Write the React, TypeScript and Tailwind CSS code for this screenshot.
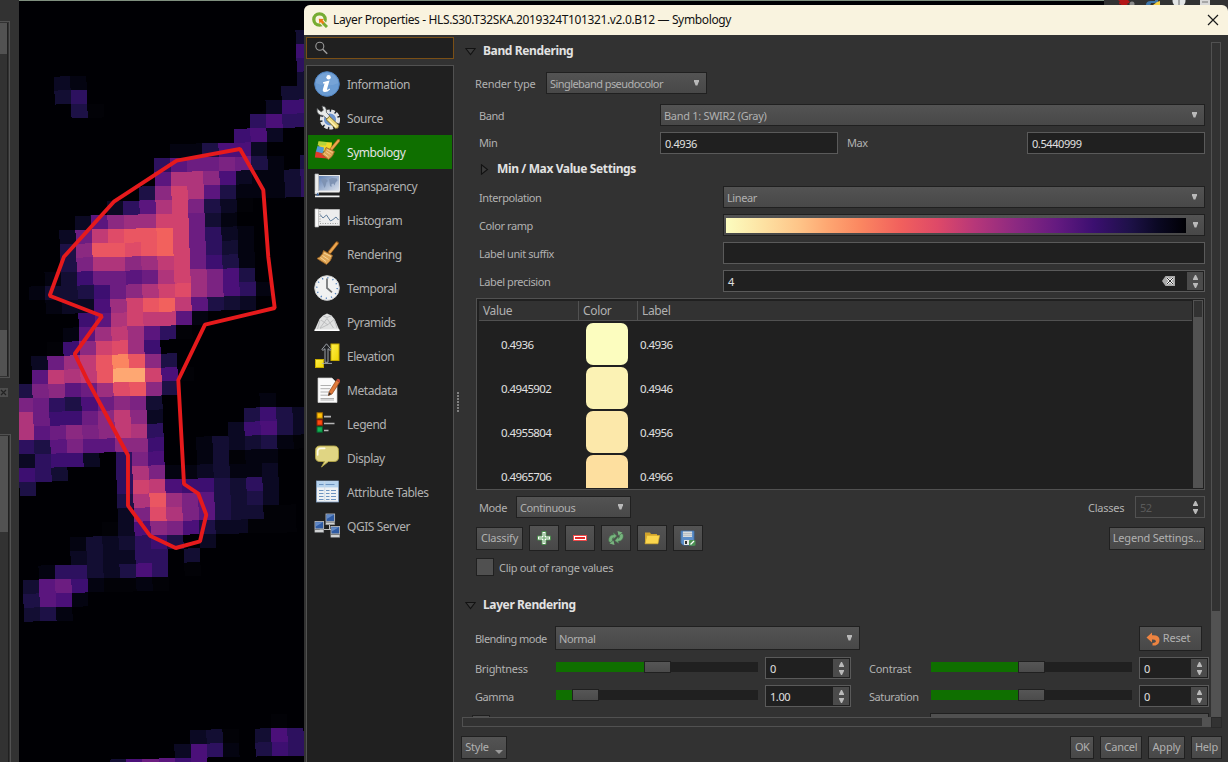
import React from "react";

const PALETTE: Record<string, string> = {
  "0": "#020207", "1": "#040411", "2": "#0b0923", "3": "#130e33", "4": "#1d1146",
  "5": "#2d115f", "6": "#3d0f71", "7": "#4b1079", "8": "#5b167e", "9": "#6c1d81",
  A: "#7b2382", B: "#8b2981", C: "#9d2f7f", D: "#af357b", E: "#c13b75",
  F: "#d0426e", G: "#df4b68", H: "#ea5662", I: "#f2615d", J: "#fb8560", K: "#fea772",
};

const FIRST_ROW = -9;
const FIRST_COL = -9;
const RASTER: string[] = [
  "..................3",
  "..................6",
  "..................5",
  "...21.............3",
  "...35............33",
  "....40..........266",
  "...............5755",
  "..............672..",
  "..........114772...",
  ".........5899A941.4",
  ".........8DDB721135",
  "........4BFD8411135",
  "......258DFA420....",
  "....28BCCFF931.....",
  "...29EGHHIF9521....",
  "...4BHHGHIF9531....",
  "...4ADDBCEF9641....",
  "..1369989DFCA74....",
  ".133469BDFGCA751...",
  "..1227CFHIE8432....",
  "....68DFEE81.......",
  "...18CEC850........",
  "..06BFGC6..........",
  ".29CEHJHB4.........",
  ".8EDEHKKF70........",
  "4AB89CGHB4.........",
  "A95479BA3......1...",
  "D9669BEB2.....46421",
  "D89BABED5....26742.",
  "548A88BB6..1323410.",
  "25662.5A7..13011...",
  "653...5DA1123112...",
  "4.....5FE7664352...",
  "......4DHCA84342...",
  "......2AGDA843300..",
  ".....027BA7422000..",
  "...1323564.2.......",
  "...232255 3........",
  ".15532475 0........",
  "389610010..........",
  "4871...............",
  "341................",
  "...................",
  "...................",
  "...................",
  "...................",
  "...................",
  "...................",
  "...................",
  "...............0...",
  "..........230.375..",
  ".........2751.465..",
  ".....379867........",
];

function corner(c: number, r: number) {
  const x = (462 + 48.6 * c + 1.45 * r) / 3;
  const y = (475 - c + 41.85 * r) / 3;
  return `${x.toFixed(2)},${y.toFixed(2)}`;
}

function MapCanvas() {
  const cells: React.ReactNode[] = [];
  RASTER.forEach((line, ri) => {
    const r = ri + FIRST_ROW;
    for (let i = 0; i < line.length; i++) {
      const fill = PALETTE[line[i]];
      if (!fill) continue;
      const c = i + FIRST_COL;
      cells.push(
        <polygon
          key={`${r}_${c}`}
          points={`${corner(c, r)} ${corner(c + 1, r)} ${corner(c + 1, r + 1)} ${corner(c, r + 1)}`}
          fill={fill}
        />
      );
    }
  });
  return (
    <svg className="block h-[761px] w-[290px]" viewBox="19 1 290 761" shapeRendering="crispEdges">
      {cells}
      <path
        shapeRendering="auto"
        fill="none"
        stroke="#e61a1c"
        strokeWidth="3.9"
        strokeLinejoin="bevel"
        d="M240 149 263.3 190 268.3 257 274.7 308 205 324.7 178.3 380 184 484 198.3 493.7 206.3 514.7 200 541.3 175.7 548 150 535.7 128 505.7 128 455.3 87.3 380 74.7 354 102 316 49.7 295.7 64 256.7 114.3 201.3 176.7 160.7Z"
      />
    </svg>
  );
}

function LeftDocks() {
  return (
    <div className="flex h-full w-[19px] shrink-0 flex-col bg-[#323232]">
      <div className="mt-[21px] h-[357px] w-[10px] border-y border-r border-[#515151] py-px pr-px">
        <div className="flex h-full flex-col border-r border-[#202020] bg-[#323232]">
          <div className="h-[31px] bg-[#525252]" />
          <div className="flex-1" />
          <div className="h-[46px] bg-[#525252]" />
        </div>
      </div>
      <svg className="mt-[10px] h-[9px] w-[8px]" viewBox="0 0 8 9">
        <rect width="8" height="9" fill="#4d4d4d" />
        <path d="M1 2 6 7M6 2 1 7" stroke="#232323" strokeWidth="1.2" />
      </svg>
      <div className="mt-[37px] w-[11px] flex-1 border-t border-r border-[#515151] pt-px pr-px">
        <div className="h-full border-r border-[#202020]">
          <div className="h-[96px] bg-[#525252]" />
        </div>
      </div>
    </div>
  );
}

const ICONS: Record<string, React.ReactNode> = {
  Information: (
    <g>
      <circle cx="13" cy="13" r="12.3" fill="#6a9bd2" stroke="#5285c2" />
      <path d="M1.5 12a11.6 11.6 0 0 1 23 0q-11 5-23 0Z" fill="#85aedb" opacity=".45" />
      <circle cx="14.6" cy="6.3" r="2.2" fill="#fff" />
      <path d="M9 11.300q3.500-1.300 6.500-1.700l-2.500 8.600q-.3 1.400 2.600-.6l.5 1q-2.800 2.700-5.400 2.500-2.500-.3-1.800-2.900l1.700-5.800h-1.600Z" fill="#fff" />
    </g>
  ),
  Source: (
    <g>
      <circle cx="16" cy="14.5" r="8.3" fill="#3e5f93" stroke="#dfe1e3" strokeWidth="3.6" strokeDasharray="3.6 1.4" />
      <circle cx="16" cy="14.5" r="6.8" fill="#6c94cf" stroke="#e8e8e8" strokeWidth="1.5" />
      <path d="M3 3.500 7.200 6.800 9.300 5.200 8 1Q13 1.500 12.400 7.300L16 11.200 13 14 9 10.500Q2.500 10.500 3 3.500Z" fill="#e9ebea" stroke="#55585a" strokeWidth=".8" />
      <path d="M12 14.500 15.500 11.300 25 20.300Q25 24 21.500 23.700Z" fill="#ecd87c" stroke="#6b5c22" strokeWidth=".8" />
      <path d="m14.500 14.500 7.500 7.500" stroke="#fff3b8" strokeWidth="1.2" />
    </g>
  ),
  Symbology: (
    <g>
      <path d="M4.500 2.500 18 3.500 17 13 6 12Z" fill="#f4d929" />
      <path d="M4.500 2.500 13 3 12 6.500 3.600 6.500Z" fill="#b8d439" />
      <path d="M3.500 7 10 8.500 9 15 1.800 13Z" fill="#4f9ad8" />
      <path d="M1.800 12.500 9 14.500 14 19.500 .8 18.500Z" fill="#e2392b" />
      <path d="M24.600 1.500 17.500 10" stroke="#a5641e" strokeWidth="3.400" strokeLinecap="round" />
      <path d="M24.300 1.800 17.500 10" stroke="#eba650" strokeWidth="2" strokeLinecap="round" />
      <path d="M12 8.500 20.500 12.500Q19 18 14.500 20.500L7.500 15Q11.500 12.500 12 8.500Z" fill="#dca253" stroke="#9b6120" strokeWidth=".8" />
      <path d="M10 14.500 14.500 18M12 12.500 16.500 15.500M13 10.500 18.500 13.500" stroke="#f6d08e" strokeWidth=".9" />
    </g>
  ),
  Transparency: (
    <g>
      <rect x="4" y="2.5" width="21.500" height="15.500" fill="url(#sky)" stroke="#e6e6e6" />
      <path d="M7 7q3-2 5-1l2 2-1.500 1-1 4-1 2-1.500-4ZM15 6l3-1 5 .5.500 2-2 2-1 3-1-2-2 .5 0 3-1.500-1Z" fill="#7f93b3" />
      <path d="M1 1h3.500v20H1Z" fill="#eceded" stroke="#b3b5b7" strokeWidth=".7" />
      <path d="M1 18h24.500v1.600H1ZM1 22.500h24.500v1.800H1Z" fill="#f0f0f0" />
      <path d="m3.500 19.500 1.800 3h-3Z" fill="#36619e" />
    </g>
  ),
  Histogram: (
    <g>
      <path d="M3 2.500h22.500v16H3Z" fill="#ededed" stroke="#c8c8c8" strokeWidth=".7" />
      <path d="M1 2h3.500v18H1Z" fill="#fafafa" stroke="#b5b5b5" strokeWidth=".7" />
      <path d="M6 4v12.500h18" fill="none" stroke="#9a9a9a" strokeDasharray="1 1.500" />
      <path d="m6 7.500 3 3.500L12.500 8l4 6 2.500-1.500L22 10l2.500 3" fill="none" stroke="#5f7d9c" strokeWidth="1" />
    </g>
  ),
  Rendering: (
    <g>
      <path d="M23 2.200 15.800 11" stroke="#9b5d1b" strokeWidth="3.600" strokeLinecap="round" />
      <path d="M22.700 2.500 16 11" stroke="#eba650" strokeWidth="2.200" strokeLinecap="round" />
      <path d="M9.500 9.500 18.500 14.500Q17 20.500 12.500 23.500L3 17.500Q8.500 15 9.500 9.500Z" fill="#dfa657" stroke="#9b6120" strokeWidth=".8" />
      <path d="M6.500 16.500 12 20.500M8.500 14.500 14.500 18.500M10 12 17 15.500" stroke="#f6d59a" strokeWidth="1" />
    </g>
  ),
  Temporal: (
    <g>
      <circle cx="13" cy="13" r="12.300" fill="#f1f2f2" stroke="#cfd1d2" />
      <circle cx="13" cy="13" r="10.200" fill="none" stroke="#5181bf" strokeWidth="1.400" strokeDasharray="1.200 4.140" />
      <path d="M13 3.500V13l5 4.300" fill="none" stroke="#6f7274" strokeWidth="1.700" />
    </g>
  ),
  Pyramids: (
    <g>
      <path d="M5.500 10 9 6.500 13 4.500 17.500 6.500 20.500 10 25.500 21.500H.5Z" fill="#e0e1e1" />
      <path d="m9 6.800 4 1.700 4.500-1.700M6 11l-2.500 9M13 9.500 6 19M13 9.500l6.500 9.500M7 11l7 5M20 10.500l-6 5-8 4M20.500 11l2.500 8" fill="none" stroke="#b4b5b6" strokeWidth=".8" />
      <path d="M.5 20.500h25v1.500H.5Z" fill="#fff" />
    </g>
  ),
  Elevation: (
    <g>
      <rect x="17" y="1" width="8" height="16.500" fill="url(#yel)" stroke="#c8ac00" />
      <rect x="1.500" y="16.500" width="8" height="8" fill="url(#yel)" stroke="#c8ac00" />
      <path d="m12.500.8 4.700 5.700-1.200.9-2-1.700v13.600h-3V5.700L9 7.400l-1.200-.9ZM8 20.400h10" fill="#202225" stroke="#a9aeb3" strokeWidth=".9" />
    </g>
  ),
  Metadata: (
    <g>
      <path d="M4 1h14l5 5v19.500H4Z" fill="#fafafa" stroke="#cfcfcf" strokeWidth=".7" />
      <path d="M6.500 8.500H17M6.500 11.700H16M6.500 15H15M6.500 18.200H14M6.500 21.500H20M6.500 23H20" stroke="#b0b0b0" strokeWidth="1" />
      <path d="m22.500 3 3 2.500-7.500 11.500-3.500 1.500.7-3.800Z" fill="#e07a3c" stroke="#8e4317" strokeWidth=".7" />
      <path d="m22.500 3 1-1.200q2.500 0 2.700 2.200L25.500 5.500Z" fill="#cc4b3b" />
      <path d="m14.400 18.700.6-3.400 2.300 1.800Z" fill="#333" />
    </g>
  ),
  Legend: (
    <g>
      <rect x="3" y="1.800" width="5.400" height="5.400" fill="#ffc20a" stroke="#a36b00" />
      <rect x="3" y="8.800" width="5.400" height="5.400" fill="#ff4a10" stroke="#8f2303" />
      <rect x="3" y="15.800" width="5.400" height="5.400" fill="#12b055" stroke="#08602c" />
      <path d="M10 5.700h7M10 12.500h10.500M10 19.500h4.500" stroke="#b6b6b6" strokeWidth="1.700" />
    </g>
  ),
  Display: (
    <g>
      <path d="M6 1h14q4.500 0 4.500 4.500v6.500q0 4.500-4.500 4.500h-5.500L7.500 22l3-5.500H6q-4.500 0-4.500-4.500V5.500Q1.500 1 6 1Z" fill="#e0d583" stroke="#b3a647" strokeWidth=".9" />
      <path d="M3.700 10V6q.3-2.500 3-2.600h4" fill="none" stroke="#fdfbe8" strokeWidth="1.600" strokeLinecap="round" />
    </g>
  ),
  "Attribute Tables": (
    <g>
      <rect x="2.500" y="2" width="22" height="21" fill="#eef1f4" stroke="#7f9fc4" strokeWidth=".8" />
      <rect x="3" y="2.400" width="21" height="6" fill="#b4d2ee" />
      <path d="M5 5.500h4.500M11.500 5.500h9M5 11.500h4.500M5 14.500h4.500M5 17.500h4.500M5 20.500h4.500M12 11.500h3.500M17 11.500h5M12 14.500h3.500M17 14.500h5M12 17.500h3.500M17 17.500h5M12 20.500h3.500M17 20.500h5" stroke="#6d93c0" strokeWidth="1.100" />
      <path d="M10.700 2v21" stroke="#c9d6e4" strokeWidth=".8" />
    </g>
  ),
  "QGIS Server": (
    <g>
      <path d="M6 12v4.500h14V18M15.500 12v4.500" fill="none" stroke="#c2c2c2" strokeWidth="1" />
      {[[12, 1], [1, 8.5], [17, 13.5]].map(([x, y]) => (
        <g key={x} transform={`translate(${x} ${y})`}>
          <rect width="8.600" height="7.400" fill="#2f5ba3" stroke="#b4b7bb" strokeWidth=".9" />
          <path d="M.7.700h7.200L.7 5Z" fill="#6289c6" />
          <rect x="-.2" y="8.200" width="9" height="2.600" fill="#d0d2d3" stroke="#7f8284" strokeWidth=".5" />
        </g>
      ))}
    </g>
  ),
};

const NAV = [
  "Information", "Source", "Symbology", "Transparency", "Histogram", "Rendering", "Temporal",
  "Pyramids", "Elevation", "Metadata", "Legend", "Display", "Attribute Tables", "QGIS Server",
];

function Sidebar() {
  return (
    <div className="flex w-[151px] shrink-0 flex-col pt-[2px] pl-[2px] pr-px">
      <div className="flex h-[22px] shrink-0 items-center border border-[#7a4f16] bg-[#202020] pl-[7px]">
        <svg className="size-[14px]" viewBox="0 0 14 14" fill="none" stroke="#9b9b9b">
          <circle cx="5.800" cy="5.300" r="4" strokeWidth="1.100" />
          <path d="m8.800 8.300 4.400 4.400" strokeWidth="1.500" />
        </svg>
      </div>
      <div className="mt-[6px] flex-1 border border-b-0 border-[#515151] bg-[#202020] p-px">
        {NAV.map((name) => (
          <div
            key={name}
            className={
              "flex h-[34px] items-center gap-[7px] pl-[6px] text-[12px] tracking-[-0.450px] " +
              (name === "Symbology" ? "bg-[#0f6f00] text-[#e4e4e4]" : "text-[#b1b1b1]")
            }
          >
            <svg className="size-[26px] shrink-0" viewBox="0 0 26 26">{ICONS[name]}</svg>
            <span className="mt-[2px] whitespace-nowrap">{name}</span>
          </div>
        ))}
      </div>
    </div>
  );
}

function DownArrow() {
  return (
    <svg className="h-[6px] w-[5px] shrink-0" viewBox="0 0 5 6"><path d="M0 0h5v1.300L3.400 5.500H1.600L0 1.300Z" fill="#b9b9b9" /></svg>
  );
}

function Combo({ text, className }: { text: string; className: string }) {
  return (
    <div className={"flex shrink-0 items-center justify-between border border-[#202020] bg-linear-to-b from-[#535353] to-[#484848] pl-[3px] pr-[7px] text-[#b1b1b1] " + className}>
      <span className="relative top-px whitespace-nowrap">{text}</span>
      <DownArrow />
    </div>
  );
}

function SpinArrows({ flat }: { flat?: boolean }) {
  return (
    <div className={"flex h-[18px] w-[16px] shrink-0 flex-col items-center justify-center gap-[3px] " + (flat ? "" : "bg-[#4b4b4b]")}>
      <svg className="h-[5px] w-[5px]" viewBox="0 0 5 5"><path d="M2 0h1l2 4v1H0V4Z" fill="#b9b9b9" /></svg>
      <svg className="h-[5px] w-[5px]" viewBox="0 0 5 5"><path d="M0 0h5v1L3 5H2L0 1Z" fill="#b9b9b9" /></svg>
    </div>
  );
}

function Spin({ value, className }: { value: string; className: string }) {
  return (
    <div className={"flex h-[22px] shrink-0 items-center justify-between border border-[#5a5a5a] bg-[#202020] pl-[4px] pr-px text-[#e0e0e0] " + className}>
      <span className="relative top-px">{value}</span>
      <SpinArrows />
    </div>
  );
}

function Slider({ fill, className }: { fill: string; className: string }) {
  return (
    <div className={"flex h-[12px] shrink-0 items-center " + className}>
      <div className={"h-[10px] bg-[#0f6f00] " + fill} />
      <div className="h-[12px] w-[27px] shrink-0 border border-[#202020] bg-linear-to-b from-[#565656] to-[#4b4b4b]" />
      <div className="h-[10px] flex-1 bg-[#202020]" />
    </div>
  );
}

const btn = "flex items-center justify-center border border-[#202020] bg-linear-to-b from-[#535353] to-[#484848] text-[#b1b1b1] whitespace-nowrap shrink-0";

function ToolButton({ children }: { children: React.ReactNode }) {
  return (
    <div className={btn + " h-[26px] w-[30px]"}>
      <svg className="size-[16px]" viewBox="0 0 16 16">{children}</svg>
    </div>
  );
}

const CLASSES = [
  { value: "0.4936", label: "0.4936", color: "bg-[#fcfdbf]" },
  { value: "0.4945902", label: "0.4946", color: "bg-[#fbf2b4]" },
  { value: "0.4955804", label: "0.4956", color: "bg-[#fce8aa]" },
  { value: "0.4965706", label: "0.4966", color: "bg-[#fddf9f]" },
];

function ClassTable() {
  return (
    <div className="mt-[6px] ml-[16px] flex h-[192px] w-[729px] border border-[#515151] bg-[#202020] pt-px pl-[2px] pr-px pb-px text-[12px] tracking-[-0.350px]">
      <div className="flex w-[713px] flex-col overflow-hidden">
        <div className="mt-px flex h-[20px] shrink-0 border-b border-[#515151] bg-[#323232] text-[#b1b1b1]">
          <div className="w-[100px] border-r border-[#515151] pl-[4px] leading-[19px]">Value</div>
          <div className="w-[59px] border-r border-[#515151] pl-[4px] leading-[19px]">Color</div>
          <div className="pl-[4px] leading-[19px]">Label</div>
        </div>
        {CLASSES.map((c) => (
          <div key={c.value} className="flex h-[44px] shrink-0 items-center text-[11.500px] tracking-[-0.600px] text-[#e0e0e0]">
            <div className="mt-[4px] w-[107px] pl-[22px]">{c.value}</div>
            <div className={"mt-[2px] h-[42px] w-[42px] rounded-[7px] " + c.color} />
            <div className="mt-[4px] pl-[12px]">{c.label}</div>
          </div>
        ))}
      </div>
      <div className="ml-px flex w-[10px] flex-col bg-[#525252]">
        <div className="h-[17px] border border-b-0 border-[#525252] bg-[#323232]" />
      </div>
    </div>
  );
}

function SectionTitle({ children, open, className }: { children: React.ReactNode; open?: boolean; className: string }) {
  return (
    <div className={"flex h-[16px] items-center text-[12px] font-bold tracking-[-0.380px] text-[#e2e2e2] " + className}>
      <svg className="size-[11px]" viewBox="0 0 11 11" fill="#3c3c3c" stroke="#121212" strokeWidth="1.100">
        <path d={open ? "M.8 2.500h9.400L5.500 8.500Z" : "M2.500.8v9.400L8.500 5.500Z"} />
      </svg>
      <span className="whitespace-nowrap">{children}</span>
    </div>
  );
}

function Label({ children, className }: { children: React.ReactNode; className: string }) {
  return <div className={"shrink-0 whitespace-nowrap " + className}><span className="relative top-px">{children}</span></div>;
}

function Panel() {
  return (
    <div className="flex h-[682px] w-[751px] flex-col overflow-hidden text-[11px] tracking-[-0.420px] text-[#b1b1b1]">
      <SectionTitle open className="mt-[8px] gap-[7px] pl-[5px]">Band Rendering</SectionTitle>
      <div className="mt-[13px] flex h-[22px] shrink-0 items-center pl-[15px]">
        <Label className="w-[71px] tracking-[-0.200px]">Render type</Label>
        <Combo text="Singleband pseudocolor" className="h-[22px] w-[161px] tracking-[-0.560px]" />
      </div>
      <div className="mt-[10px] flex h-[22px] shrink-0 items-center pl-[19px]">
        <Label className="w-[181px]">Band</Label>
        <Combo text="Band 1: SWIR2 (Gray)" className="h-[22px] w-[545px] tracking-[-0.300px]" />
      </div>
      <div className="mt-[6px] flex h-[22px] shrink-0 items-center pl-[19px]">
        <div className="w-[181px]">Min</div>
        <div className="flex h-[22px] w-[178px] items-center border border-[#5a5a5a] bg-[#202020] pl-[4px] text-[#e0e0e0]"><span className="relative top-px">0.4936</span></div>
        <div className="ml-[9px] w-[180px]">Max</div>
        <div className="flex h-[22px] w-[178px] items-center border border-[#5a5a5a] bg-[#202020] pl-[4px] text-[#e0e0e0]"><span className="relative top-px">0.5440999</span></div>
      </div>
      <SectionTitle className="mt-[7px] gap-[7px] pl-[19px]">Min / Max Value Settings</SectionTitle>
      <div className="mt-[9px] flex h-[22px] shrink-0 items-center pl-[19px]">
        <Label className="w-[244px]">Interpolation</Label>
        <Combo text="Linear" className="h-[22px] w-[482px]" />
      </div>
      <div className="mt-[6px] flex h-[22px] shrink-0 items-center pl-[19px]">
        <Label className="w-[244px]">Color ramp</Label>
        <div className="flex h-[22px] w-[482px] items-center justify-between border border-[#202020] bg-linear-to-b from-[#535353] to-[#484848] pr-[6px] pl-[2px]">
          <div className="h-[15px] w-[460px] bg-[linear-gradient(to_right,#fcfdbf,#fde2a3_8%,#fec488_16%,#fea772_22%,#fb8861_29%,#f1605d_38%,#de4968_46%,#b73779_54%,#8c2981_63%,#641a80_72%,#3b0f70_80%,#1d1147_88%,#0a0822_94%,#000004)]" />
          <DownArrow />
        </div>
      </div>
      <div className="mt-[6px] flex h-[22px] shrink-0 items-center pl-[19px]">
        <Label className="w-[244px]">Label unit suffix</Label>
        <div className="h-[22px] w-[482px] border border-[#5a5a5a] bg-[#202020]" />
      </div>
      <div className="mt-[6px] flex h-[22px] shrink-0 items-center pl-[19px]">
        <Label className="w-[244px]">Label precision</Label>
        <div className="flex h-[22px] w-[482px] items-center border border-[#5a5a5a] bg-[#202020] pl-[4px] pr-px text-[#e0e0e0]">
          <span className="relative top-px flex-1">4</span>
          <svg className="mr-[12px] h-[10px] w-[13px]" viewBox="0 0 13 10">
            <path d="M0 5 3.500 0H13V10H3.500Z" fill="#a8a8a8" />
            <path d="m5 2 6 6m0-6L5 8" stroke="#fff" strokeWidth="2" />
            <path d="m5 2 6 6m0-6L5 8" stroke="#303030" strokeWidth="1" />
          </svg>
          <SpinArrows />
        </div>
      </div>
      <ClassTable />
      <div className="mt-[6px] flex h-[22px] shrink-0 items-center pl-[19px]">
        <Label className="w-[37px]">Mode</Label>
        <Combo text="Continuous" className="h-[22px] w-[115px]" />
        <Label className="ml-[457px] w-[47px] tracking-[-0.250px]">Classes</Label>
        <div className="flex h-[22px] w-[70px] items-center justify-between border border-[#515151] bg-[#323232] pl-[4px] pr-px text-[#5a5a5a]">
          <span className="relative top-px">52</span>
          <SpinArrows flat />
        </div>
      </div>
      <div className="mt-[7px] flex h-[26px] shrink-0 items-center gap-[6px] pl-[16px]">
        <div className={btn + " h-[23px] w-[47px] tracking-[-0.200px]"}>Classify</div>
        <ToolButton>
          <path d="M6 1.500h4V6h4.500v4H10v4.500H6V10H1.500V6H6Z" fill="#fff" stroke="#4a8c4c" strokeWidth="1" />
          <path d="M8 3v10M3 8h10" stroke="#5c9e5e" strokeWidth="1" />
        </ToolButton>
        <ToolButton>
          <rect x="1.500" y="5.500" width="13" height="5" fill="#fff" stroke="#ec4a4a" strokeWidth="1" />
          <path d="M3 8h10" stroke="#e42929" strokeWidth="2" />
        </ToolButton>
        <ToolButton>
          <path d="M.5 10.500Q.5 4 6.500 4.500L6 2.500 9 6 5.500 8.500V7Q3.500 8 4 10.500L2 11.500ZM15.500 5.500Q15.500 12 9.500 11.500L10 13.500 6.500 10.500 10.300 7.300V9Q12.500 8 12 5.500L14 4.500Z" fill="#78b57f" stroke="#4c8656" strokeWidth=".5" transform="rotate(-8 8 8)" />
          <path d="m9.500 1 5 1.500-4 3ZM6.500 15l-5-1.500 4-3Z" fill="#78b57f" />
        </ToolButton>
        <ToolButton>
          <path d="M1 2.500h5l1 1.500h6v2H3L1 13Z" fill="#d1a32c" />
          <path d="M2.800 5.500H15.500L14 13.800H1Z" fill="#fbd64d" stroke="#d9ad2d" strokeWidth=".6" />
        </ToolButton>
        <ToolButton>
          <path d="M1 1h13v14H3L1 13Z" fill="#5d8fc9" stroke="#3f6fa9" strokeWidth=".8" />
          <path d="M3 1.500h9V7H3Z" fill="#d8dcde" />
          <path d="M3 3.500h9M3 5.300h9" stroke="#a5abb0" strokeWidth=".6" />
          <path d="M4 10h6v5H4Z" fill="#e4e6e7" />
          <path d="M5 11h2v3H5Z" fill="#333" />
          <rect x="9" y="10" width="6.500" height="5.700" rx="1" fill="#4b9152" />
          <path d="m10.500 14.500 3.500-3.500" stroke="#fff" strokeWidth="1.300" />
        </ToolButton>
        <div className={btn + " ml-[400px] h-[23px] w-[96px] tracking-[-0.200px]"}>Legend Settings...</div>
      </div>
      <div className="mt-[7px] flex h-[18px] shrink-0 items-center gap-[5px] pl-[16px]">
        <div className="size-[18px] border border-[#202020] bg-[#505050]" />
        <Label className="tracking-[-0.320px]">Clip out of range values</Label>
      </div>
      <SectionTitle open className="mt-[21px] gap-[7px] pl-[5px]">Layer Rendering</SectionTitle>
      <div className="mt-[13px] flex h-[25px] shrink-0 items-start pl-[15px]">
        <Label className="w-[80px] leading-[24px] tracking-[-0.550px]">Blending mode</Label>
        <Combo text="Normal" className="h-[24px] w-[305px]" />
        <div className={btn + " ml-[279px] h-[25px] w-[63px] gap-[3px] pr-[5px] tracking-[-0.200px]"}>
          <svg className="size-[14px]" viewBox="0 0 14 14">
            <path d="M.5 5.500 6 .5v2.700q7.500-.6 7.500 4.800 0 4-4 5.500H6.500V11Q10.500 10.800 9.800 8.800 9 7.300 6 7.500V10.500Z" fill="#ec8341" />
          </svg>
          Reset
        </div>
      </div>
      <div className="mt-[6px] flex h-[22px] shrink-0 items-center pl-[15px]">
        <Label className="w-[81px] tracking-[-0.300px]">Brightness</Label>
        <Slider fill="w-[88px]" className="relative -top-px w-[202px]" />
        <Spin value="0" className="ml-[7px] w-[86px]" />
        <Label className="ml-[18px] w-[62px] tracking-[-0.250px]">Contrast</Label>
        <Slider fill="w-[87px]" className="relative -top-px w-[201px]" />
        <Spin value="0" className="ml-[7px] w-[70px]" />
      </div>
      <div className="mt-[6px] flex h-[22px] shrink-0 items-center pl-[15px]">
        <Label className="w-[81px]">Gamma</Label>
        <Slider fill="w-[16px]" className="relative -top-px w-[202px]" />
        <Spin value="1.00" className="ml-[7px] w-[86px]" />
        <Label className="ml-[18px] w-[62px]">Saturation</Label>
        <Slider fill="w-[87px]" className="relative -top-px w-[201px]" />
        <Spin value="0" className="ml-[7px] w-[70px]" />
      </div>
      <div className="mt-[6px] flex h-[22px] shrink-0 items-start pl-[12px]">
        <div className="mt-[2px] size-[18px] border border-[#202020] bg-[#505050]" />
        <div className="ml-[440px] h-[22px] w-[279px] border border-[#202020] bg-[#505050]" />
      </div>
    </div>
  );
}

function Dialog() {
  return (
    <div className="absolute top-[5px] left-[304px] flex h-[757px] w-[924px] flex-col overflow-hidden rounded-t-[6px] bg-[#323232]">
      <div className="flex h-[30px] shrink-0 items-center bg-[#f9f3df] pr-[9px] pl-[8px]">
        <svg className="size-[16px]" viewBox="0 0 16 16">
          <circle cx="7.500" cy="7.500" r="5.700" fill="none" stroke="#76ac32" strokeWidth="3.300" />
          <path d="m9 9 5.500 5.500" stroke="#f9f3df" strokeWidth="5" />
          <path d="m10.500 10.500 4.500 4.500" stroke="#76ac32" strokeWidth="3" />
          <path d="m6.800 6.800 5 .3-1.200 1.400 1.800 1.900-1.700 1.700-1.900-1.800-1.400 1.300Z" fill="#ee7913" />
        </svg>
        <span className="ml-[5px] flex-1 whitespace-nowrap text-[12px] tracking-[-0.360px] text-[#111]">
          Layer Properties - HLS.S30.T32SKA.2019324T101321.v2.0.B12 — Symbology
        </span>
        <svg className="size-[12px]" viewBox="0 0 12 12"><path d="m1 1 10 10M11 1 1 11" stroke="#1a1a1a" strokeWidth="1.200" /></svg>
      </div>
      <div className="-ml-px flex flex-1 border-l border-[#414141] pl-px">
        <div className="-ml-px flex"><Sidebar /></div>
        <div className="flex w-[5px] shrink-0 flex-col items-start justify-start gap-px pt-[357px] pl-[2px]">
          {[0, 1, 2, 3, 4, 5, 6].map((i) => (<div key={i} className="h-[2px] w-[2px] shrink-0 bg-[#808080]" />))}
        </div>
        <div className="flex flex-1 flex-col">
          <div className="flex">
            <Panel />
            <div className="mt-[7px] flex h-[675px] w-[10px] shrink-0 flex-col border border-[#515151]">
              <div className="mt-[568px] flex-1 bg-[#525252]" />
            </div>
          </div>
          <div className="flex h-[10px] pl-[2px]">
            <div className="flex w-[749px] justify-end border border-[#515151]"><div className="w-[8px] bg-[#525252]" /></div>
            <div className="h-[11px] w-[11px] border border-[#292929]" />
          </div>
          <div className="mt-[9px] flex h-[23px] pl-px text-[11px] tracking-[-0.200px]">
            <div className={btn + " w-[46px] gap-[6px]"}>
              Style
              <svg className="mt-[8px] h-[4px] w-[8px]" viewBox="0 0 8 4"><path d="M0 0h8L4 4Z" fill="#9a9a9a" /></svg>
            </div>
            <div className={btn + " ml-[563px] w-[24px] tracking-[-0.600px]"}>OK</div>
            <div className={btn + " ml-[6px] w-[42px]"}>Cancel</div>
            <div className={btn + " ml-[6px] w-[37px]"}>Apply</div>
            <div className={btn + " ml-[6px] w-[31px]"}>Help</div>
          </div>
        </div>
      </div>
    </div>
  );
}

export default function App() {
  return (
    <div className="relative h-[762px] w-[1228px] overflow-hidden bg-[#000004] font-['Noto_Sans','Open_Sans',sans-serif]">
      <svg width="0" height="0" className="absolute">
        <defs>
          <linearGradient id="sky" x1="0" y1="0" x2="1" y2="1"><stop offset="0" stopColor="#5c7cb0" /><stop offset="1" stopColor="#dfe5ee" /></linearGradient>
          <linearGradient id="yel" x1="0" y1="0" x2="1" y2="1"><stop offset="0" stopColor="#fff04d" /><stop offset="1" stopColor="#efd500" /></linearGradient>
        </defs>
      </svg>
      <div className="flex h-full">
        <LeftDocks />
        <div className="flex flex-1 flex-col">
          <div className="flex h-[8px] shrink-0">
            <div className="w-[1085px] border-t border-[#7f8f7f]" />
            <svg className="h-[8px] flex-1" viewBox="1104 0 124 8" preserveAspectRatio="none">
              <rect x="1104" width="124" height="8" fill="#323232" />
              <circle cx="1124" cy="1" r="4.500" fill="#b31616" stroke="#b31616" strokeWidth="2" strokeDasharray="2 1.500" />
              <circle cx="1132" cy="4" r="2.500" fill="#888" />
              <path d="M1146 5q0-4 5-4h4V0h3v3h-7l-1 3Z" fill="#3e76ab" />
              <path d="M1153 5h7V1l-3 1Z" fill="#f3cf45" />
              <circle cx="1179" cy="1" r="6.500" fill="#e4e6e6" /><path d="M1179 0v8" stroke="#666" />
              <path d="M1200 0h10v8h-10Z" fill="#d8d8d8" /><path d="M1202 2h6" stroke="#777" />
            </svg>
          </div>
          <div className="-mt-[7px] w-[290px]"><MapCanvas /></div>
        </div>
      </div>
      <Dialog />
    </div>
  );
}
